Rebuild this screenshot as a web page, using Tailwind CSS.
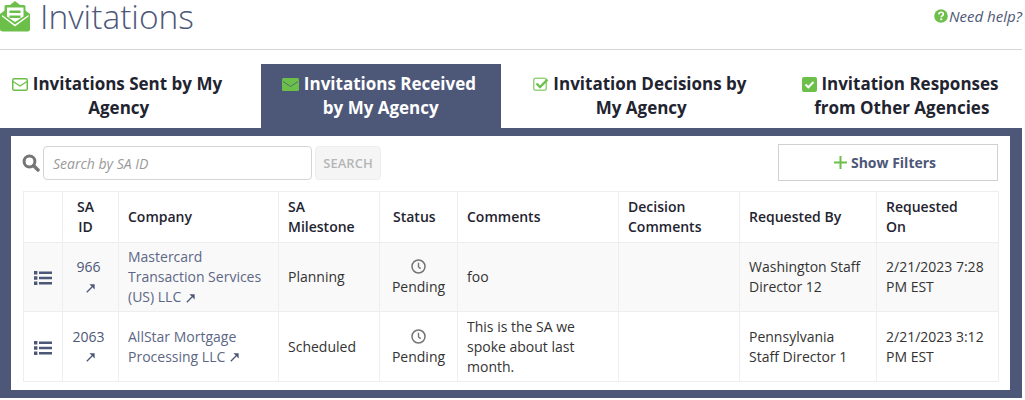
<!DOCTYPE html>
<html lang="en">
  <head>
    <meta charset="UTF-8" />
    <title>Invitations</title>
    <script src="https://cdn.jsdelivr.net/npm/@tailwindcss/browser@4"></script>
  </head>
  <body class="bg-white font-['Open_Sans',sans-serif] text-[14px] leading-[20px] text-[#333] overflow-hidden">
    <div class="w-[1022px]">
      <header class="h-[50px] flex justify-between border-b border-[#d5d5d5]">
        <div class="flex items-start">
          <svg class="w-[31px] h-[31px] mt-[1px]" viewBox="0 0 31 31">
            <path fill="#6cc04a" d="M15 0 L20 4 H24 Q25.5 4 25.5 5.5 V9.5 L30 13 V28 Q30 30.5 27.5 30.5 H3 Q0 30.5 0 28 V13 L4.5 9.5 V5.5 Q4.5 4 6 4 H10 Z" />
            <path fill="#fff" d="M7 6.5 H23.5 V15.5 L15 21 L7 15.5 Z" />
            <path fill="#6cc04a" d="M9.5 9.5 H20.5 V12 H9.5 Z M9.5 14.5 H20.5 V17 H9.5 Z" />
            <path fill="#fff" d="M2 14 L15 23.5 L28.5 14 V15.5 L15 25.5 L2 15.5 Z" />
          </svg>
          <h1 class="ml-[9px] text-[33.5px] leading-[33px] text-[#4d5778] font-light">Invitations</h1>
        </div>
        <a class="flex items-center h-[32px] italic text-[#4d5778] text-[15px]">
          <svg class="w-[14px] h-[14px] mr-[1px]" viewBox="0 0 14 14">
            <circle cx="7" cy="7" r="6.8" fill="#6cc04a" />
            <path d="M4.8 5.4 Q5 3.3 7.1 3.3 Q9.3 3.3 9.3 5.2 Q9.3 6.3 8 7 Q7.2 7.4 7.2 8.2" fill="none" stroke="#fff" stroke-width="1.6" />
            <rect x="6.2" y="9.4" width="2" height="1.8" fill="#fff" />
          </svg>
          Need help?
        </a>
      </header>

      <nav class="grid grid-cols-4 gap-x-[20px] mt-[14px] h-[64px] text-[17px] leading-[24px] font-bold text-[#1f2430] text-center">
        <a class="pt-[8px] pl-[6px] pr-[9px]">
          <svg class="inline w-[16px] h-[13px] align-[-1px] -ml-[3px]" viewBox="0 0 16 13">
            <rect x="0.75" y="0.75" width="14.5" height="11.5" rx="1.5" fill="none" stroke="#6cc04a" stroke-width="1.5" />
            <path d="M1 3.5 L8 8 L15 3.5" fill="none" stroke="#6cc04a" stroke-width="1.3" />
          </svg>
          Invitations Sent by My Agency
        </a>
        <a class="pt-[8px] px-[20px] bg-[#4d5778] text-white">
          <svg class="inline w-[17px] h-[13px] align-[-1px] -ml-[3px]" viewBox="0 0 17 13">
            <rect width="17" height="13" rx="1.5" fill="#6cc04a" />
            <path d="M1 3.5 L8.5 8.5 L16 3.5" fill="none" stroke="#4d5778" stroke-width="0.8" />
          </svg>
          Invitations Received by My Agency
        </a>
        <a class="pt-[8px] px-[6px]">
          <svg class="inline w-[16px] h-[14px] align-[-1px] -ml-[3px]" viewBox="0 0 16 14">
            <rect x="0.75" y="1.25" width="12.5" height="12" rx="2" fill="none" stroke="#6cc04a" stroke-width="1.5" opacity="0.7" />
            <path d="M3.5 6.5 L7 10 L14.5 2.5" fill="none" stroke="#6cc04a" stroke-width="2.4" />
          </svg>
          Invitation Decisions by My Agency
        </a>
        <a class="pt-[8px] px-[6px]">
          <svg class="inline w-[15px] h-[15px] align-[-2px] -ml-[3px]" viewBox="0 0 15 15">
            <rect width="15" height="15" rx="2" fill="#6cc04a" />
            <path d="M3.5 7.5 L6.3 10.3 L11.5 5" fill="none" stroke="#fff" stroke-width="2" />
          </svg>
          Invitation Responses from Other Agencies
        </a>
      </nav>

      <main class="border-[#4d5778] border-x-[11px] border-y-[8px] border-r-[12px] pt-[8px] pb-[9px] px-[12px] h-[270px]">
        <div class="flex items-start">
          <svg class="w-[18px] h-[18px] mt-[10px] -ml-[1px]" viewBox="0 0 18 18">
            <circle cx="7.5" cy="7.5" r="5.4" fill="none" stroke="#757575" stroke-width="3" />
            <path d="M11.5 11.5 L16 16" stroke="#757575" stroke-width="3.4" stroke-linecap="round" />
          </svg>
          <input class="ml-[3px] w-[269px] h-[34px] mt-[2px] border border-[#d5d5d5] rounded-[4px] px-[9px] text-[14px] italic placeholder:text-[#9a9a9a]" placeholder="Search by SA ID" />
          <button class="ml-[3px] w-[66px] h-[34px] mt-[2px] border border-[#eeeeee] bg-[#f5f5f5] rounded-[4px] text-[13px] font-semibold text-[#b5b5b5]">SEARCH</button>
          <button class="ml-auto w-[220px] h-[37px] border border-[#d0d0d0] pr-[6px] text-[14px] font-bold text-[#4d5778] flex items-center justify-center">
            <svg class="w-[13px] h-[13px] mr-[4px]" viewBox="0 0 13 13"><path d="M6.5 0 V13 M0 6.5 H13" stroke="#6cc04a" stroke-width="2" /></svg>
            Show Filters
          </button>
        </div>

        <table class="mt-[10px] w-[975px] table-fixed border-collapse border border-[#eeeeee]">
          <colgroup>
            <col class="w-[39px]" /><col class="w-[56px]" /><col class="w-[160px]" /><col class="w-[101px]" /><col class="w-[78px]" /><col class="w-[161px]" /><col class="w-[121px]" /><col class="w-[137px]" /><col class="w-[122px]" />
          </colgroup>
          <thead class="text-[#1f2430]">
            <tr class="h-[51px] text-left">
              <th class="border border-[#eeeeee] font-[550]"></th>
              <th class="border border-[#eeeeee] font-[550] text-center pr-[10px]">SA<br />ID</th>
              <th class="border border-[#eeeeee] font-[550] px-[9px]">Company</th>
              <th class="border border-[#eeeeee] font-[550] px-[9px]">SA Milestone</th>
              <th class="border border-[#eeeeee] font-[550] pl-[13px]">Status</th>
              <th class="border border-[#eeeeee] font-[550] px-[9px]">Comments</th>
              <th class="border border-[#eeeeee] font-[550] px-[9px]">Decision Comments</th>
              <th class="border border-[#eeeeee] font-[550] px-[9px]">Requested By</th>
              <th class="border border-[#eeeeee] font-[550] px-[9px]">Requested<br />On</th>
            </tr>
          </thead>
          <tbody>
            <tr class="h-[69px] bg-[#f9f9f9]">
              <td class="border border-[#eeeeee] text-center">
                <svg class="inline w-[18px] h-[14px]" viewBox="0 0 18 14"><path d="M0 0 H3.4 V3.4 H0 Z M0 5.3 H3.4 V8.7 H0 Z M0 10.6 H3.4 V14 H0 Z M5 0.4 H18 V3 H5 Z M5 5.7 H18 V8.3 H5 Z M5 11 H18 V13.6 H5 Z" fill="#4d5778" /></svg>
              </td>
              <td class="border border-[#eeeeee] text-center text-[#4d5778] pr-[4px]">
                966<br />
                <svg class="inline w-[9px] h-[9px] ml-[4px]" viewBox="0 0 9 9"><path d="M0.8 8.2 L6 3 M5 1 H8 V4 Z" stroke="#4d5778" stroke-width="1.3" fill="#4d5778" /></svg>
              </td>
              <td class="border border-[#eeeeee] px-[9px] text-[#5d6785]">
                Mastercard Transaction Services (US) LLC
                <svg class="inline w-[9px] h-[9px] ml-[1px]" viewBox="0 0 9 9"><path d="M0.8 8.2 L6 3 M5 1 H8 V4 Z" stroke="#4d5778" stroke-width="1.3" fill="#4d5778" /></svg>
              </td>
              <td class="border border-[#eeeeee] px-[9px]">Planning</td>
              <td class="border border-[#eeeeee] text-center pt-[2px]">
                <svg class="block mx-auto w-[15px] h-[15px] mb-[3px]" viewBox="0 0 15 15"><circle cx="7.5" cy="7.5" r="6.5" fill="none" stroke="#757575" stroke-width="1.5" /><path d="M7.5 3.8 V8 L9.7 9.6" fill="none" stroke="#757575" stroke-width="1.4" /></svg>
                Pending
              </td>
              <td class="border border-[#eeeeee] px-[9px]">foo</td>
              <td class="border border-[#eeeeee] px-[9px]"></td>
              <td class="border border-[#eeeeee] px-[9px]">Washington Staff Director 12</td>
              <td class="border border-[#eeeeee] px-[9px]">2/21/2023 7:28 PM EST</td>
            </tr>
            <tr class="h-[70px]">
              <td class="border border-[#eeeeee] text-center">
                <svg class="inline w-[18px] h-[14px]" viewBox="0 0 18 14"><path d="M0 0 H3.4 V3.4 H0 Z M0 5.3 H3.4 V8.7 H0 Z M0 10.6 H3.4 V14 H0 Z M5 0.4 H18 V3 H5 Z M5 5.7 H18 V8.3 H5 Z M5 11 H18 V13.6 H5 Z" fill="#4d5778" /></svg>
              </td>
              <td class="border border-[#eeeeee] text-center text-[#4d5778] pr-[4px]">
                2063<br />
                <svg class="inline w-[9px] h-[9px] ml-[4px]" viewBox="0 0 9 9"><path d="M0.8 8.2 L6 3 M5 1 H8 V4 Z" stroke="#4d5778" stroke-width="1.3" fill="#4d5778" /></svg>
              </td>
              <td class="border border-[#eeeeee] px-[9px] text-[#5d6785]">
                AllStar Mortgage Processing LLC
                <svg class="inline w-[9px] h-[9px] ml-[1px]" viewBox="0 0 9 9"><path d="M0.8 8.2 L6 3 M5 1 H8 V4 Z" stroke="#4d5778" stroke-width="1.3" fill="#4d5778" /></svg>
              </td>
              <td class="border border-[#eeeeee] px-[9px]">Scheduled</td>
              <td class="border border-[#eeeeee] text-center pt-[2px]">
                <svg class="block mx-auto w-[15px] h-[15px] mb-[3px]" viewBox="0 0 15 15"><circle cx="7.5" cy="7.5" r="6.5" fill="none" stroke="#757575" stroke-width="1.5" /><path d="M7.5 3.8 V8 L9.7 9.6" fill="none" stroke="#757575" stroke-width="1.4" /></svg>
                Pending
              </td>
              <td class="border border-[#eeeeee] px-[9px]">This is the SA we spoke about last month.</td>
              <td class="border border-[#eeeeee] px-[9px]"></td>
              <td class="border border-[#eeeeee] px-[9px]">Pennsylvania Staff Director 1</td>
              <td class="border border-[#eeeeee] px-[9px]">2/21/2023 3:12 PM EST</td>
            </tr>
          </tbody>
        </table>
      </main>
    </div>
  </body>
</html>
